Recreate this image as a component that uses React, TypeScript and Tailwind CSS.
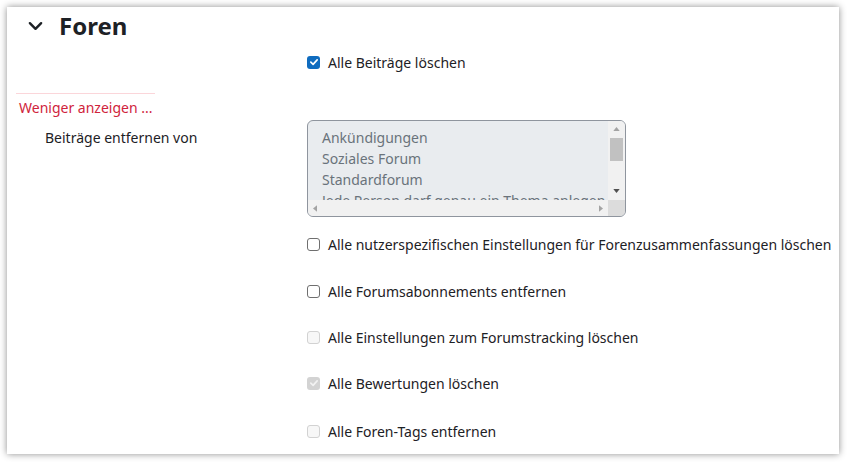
import React from "react";

type BoxState = "checked" | "unchecked" | "disabled" | "disabledChecked";

const Box: React.FC<{ state: BoxState }> = ({ state }) => {
  if (state === "checked") {
    return (
      <span className="flex h-[13px] w-[13px] items-center justify-center rounded-[3px] bg-[#0f6cbf]">
        <svg viewBox="0 0 12 12" className="h-[10px] w-[10px]">
          <path d="M2.2 6.2 L4.9 8.8 L9.8 3.4" fill="none" stroke="#fff" strokeWidth="2" strokeLinecap="round" strokeLinejoin="round" />
        </svg>
      </span>
    );
  }
  if (state === "disabledChecked") {
    return (
      <span className="flex h-[13px] w-[13px] items-center justify-center rounded-[3px] bg-[#d3d3d3]">
        <svg viewBox="0 0 12 12" className="h-[10px] w-[10px]">
          <path d="M2.2 6.2 L4.9 8.8 L9.8 3.4" fill="none" stroke="#f2f2f2" strokeWidth="2" strokeLinecap="round" strokeLinejoin="round" />
        </svg>
      </span>
    );
  }
  if (state === "disabled") {
    return <span className="block h-[13px] w-[13px] rounded-[3px] border border-[#d2d2d2] bg-[#f7f7f7]" />;
  }
  return <span className="block h-[13px] w-[13px] rounded-[3px] border border-[#6f6f6f] bg-white" />;
};

const CheckRow: React.FC<{ label: string; state: BoxState; className?: string }> = ({ label, state, className }) => (
  <div className={`flex h-[24px] items-center pl-[300px] ${className ?? ""}`}>
    <Box state={state} />
    <span className="ml-[8px] whitespace-nowrap text-[14px] text-[#1d2125]">{label}</span>
  </div>
);

const forums = ["Ankündigungen", "Soziales Forum", "Standardforum", "Jede Person darf genau ein Thema anlegen"];

export default function App() {
  return (
    <div className="min-h-screen bg-white p-[7px]" style={{ fontFamily: '"Noto Sans", "Open Sans", sans-serif' }}>
      <div className="h-[447px] w-[832px] bg-white shadow-[0_0_7px_rgba(0,0,0,0.45)]">
        {/* Header */}
        <div className="flex h-[38px] items-center pl-[21px]">
          <svg viewBox="0 0 16 10" className="h-[10px] w-[15px]">
            <path d="M2 2 L8 8 L14 2" fill="none" stroke="#1d2125" strokeWidth="2.6" strokeLinecap="round" strokeLinejoin="round" />
          </svg>
          <h2 className="ml-[16px] text-[24px] font-bold leading-none text-[#1d2125]">Foren</h2>
        </div>

        <CheckRow label="Alle Beiträge löschen" state="checked" className="mt-[5px]" />

        <div className="ml-[9px] mt-[19px] w-[139px] border-t border-[#fbd6da]" />
        <div className="ml-[12px] mt-[3px] h-[22px] text-[14px] leading-[22px] text-[#d0243c]">Weniger anzeigen ...</div>

        {/* Select row */}
        <div className="mt-[1px] flex">
          <div className="w-[300px] pl-[38px] pt-[7px] text-[14px] leading-[22px] text-[#1d2125]">Beiträge entfernen von</div>
          <div className="relative h-[97px] w-[319px] overflow-hidden rounded-[6px] border border-[#8f959e] bg-[#e9ecef]">
            <div className="pl-[14px] pt-[6px] text-[14px] leading-[21px] text-[#6a737b]">
              {forums.map((f) => (
                <div key={f} className="whitespace-nowrap">{f}</div>
              ))}
            </div>
            {/* vertical scrollbar */}
            <div className="absolute right-0 top-0 flex h-[79px] w-[17px] flex-col items-center bg-[#f1f1f1]">
              <svg viewBox="0 0 8 5" className="mt-[6px] h-[4px] w-[7px]">
                <path d="M0 5 L4 0 L8 5 Z" fill="#a3a3a3" />
              </svg>
              <div className="mt-[7px] h-[23px] w-[13px] bg-[#c1c1c1]" />
              <svg viewBox="0 0 8 5" className="mt-[28px] h-[4px] w-[7px]">
                <path d="M0 0 L8 0 L4 5 Z" fill="#505050" />
              </svg>
            </div>
            {/* horizontal scrollbar */}
            <div className="absolute bottom-0 left-0 flex h-[16px] w-[300px] items-center justify-between bg-[#f1f1f1] px-[5px]">
              <svg viewBox="0 0 5 8" className="h-[7px] w-[4px]">
                <path d="M5 0 L5 8 L0 4 Z" fill="#a3a3a3" />
              </svg>
              <svg viewBox="0 0 5 8" className="h-[7px] w-[4px]">
                <path d="M0 0 L0 8 L5 4 Z" fill="#a3a3a3" />
              </svg>
            </div>
            <div className="absolute bottom-0 right-0 h-[16px] w-[17px] bg-[#dcdcdc]" />
          </div>
        </div>

        <CheckRow label="Alle nutzerspezifischen Einstellungen für Forenzusammenfassungen löschen" state="unchecked" className="mt-[15px]" />
        <CheckRow label="Alle Forumsabonnements entfernen" state="unchecked" className="mt-[23px]" />
        <CheckRow label="Alle Einstellungen zum Forumstracking löschen" state="disabled" className="mt-[22px]" />
        <CheckRow label="Alle Bewertungen löschen" state="disabledChecked" className="mt-[22px]" />
        <CheckRow label="Alle Foren-Tags entfernen" state="disabled" className="mt-[24px]" />
      </div>
    </div>
  );
}
